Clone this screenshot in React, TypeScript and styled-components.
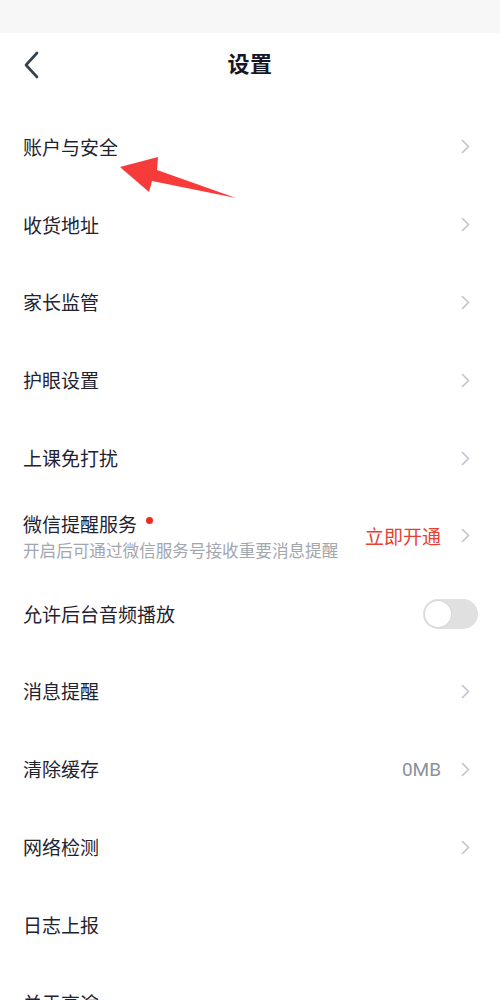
import React from 'react'
import styled, { createGlobalStyle } from 'styled-components'

const GlobalStyle = createGlobalStyle`
  html, body {
    margin: 0;
    padding: 0;
    background: #fff;
  }
  body {
    font-family: 'Noto Sans CJK SC', 'Noto Sans', sans-serif;
    color: #1f2330;
    overflow: hidden;
  }
`

const Page = styled.div`
  position: relative;
  width: 500px;
  height: 1000px;
  overflow: hidden;
  background: #fff;
`

const StatusBar = styled.div`
  height: 33px;
  background: #f7f7f7;
`

const Header = styled.header`
  height: 62px;
  display: flex;
  align-items: center;
  justify-content: center;
  position: relative;
  padding-bottom: 4px;
  box-sizing: border-box;
`

const BackButton = styled.button`
  position: absolute;
  left: 18px;
  top: 17px;
  width: 28px;
  height: 30px;
  border: 0;
  padding: 0;
  background: none;
  display: flex;
  align-items: center;
  justify-content: center;
`

const Title = styled.h1`
  margin: 0;
  font-size: 22px;
  font-weight: 700;
  color: #141826;
  letter-spacing: 0.5px;
`

const List = styled.ul`
  list-style: none;
  margin: 0;
  padding: 13px 0 0;
`

const Row = styled.li`
  height: 77.8px;
  display: flex;
  align-items: center;
  padding: 0 30px 0 23px;
  box-sizing: border-box;
`

const Main = styled.div`
  flex: 1;
  min-width: 0;
  display: flex;
  flex-direction: column;
`

const Label = styled.span`
  font-size: 19px;
  line-height: 26px;
  color: #1f2330;
  display: flex;
  align-items: center;
`

const Dot = styled.i`
  width: 7px;
  height: 7px;
  border-radius: 50%;
  background: #f02a1f;
  margin-left: 9px;
  margin-top: -6px;
`

const Sub = styled.span`
  font-size: 16.6px;
  line-height: 22px;
  margin-top: 2px;
  color: #a2a6ad;
  white-space: nowrap;
`

const Value = styled.span<{ $accent?: boolean }>`
  font-size: 19px;
  color: ${(p) => (p.$accent ? '#e8402f' : '#8b919c')};
  font-family: ${(p) =>
    p.$accent ? "'Noto Sans CJK SC', sans-serif" : "Roboto, 'Noto Sans', sans-serif"};
  margin-right: 20px;
`

const Toggle = styled.span`
  width: 55px;
  height: 30px;
  border-radius: 15px;
  background: #e0e0e0;
  display: flex;
  align-items: center;
  padding: 0 2px;
  box-sizing: border-box;
  margin-right: -8px;
`

const Knob = styled.span`
  width: 26px;
  height: 26px;
  border-radius: 50%;
  background: #fff;
  box-shadow: 0 0 0 1px #d6d6d6;
`

const Annotation = styled.svg`
  position: absolute;
  left: 0;
  top: 0;
  pointer-events: none;
`

const Chevron = () => (
  <svg width="9" height="15" viewBox="0 0 9 15">
    <path d="M1.5 1.5 L7.5 7.5 L1.5 13.5" fill="none" stroke="#bfc3ca" strokeWidth="1.6" strokeLinecap="round" strokeLinejoin="round" />
  </svg>
)

type Item = {
  label: string
  sub?: string
  dot?: boolean
  value?: string
  accent?: boolean
  toggle?: boolean
  noArrow?: boolean
}

const items: Item[] = [
  { label: '账户与安全' },
  { label: '收货地址' },
  { label: '家长监管' },
  { label: '护眼设置' },
  { label: '上课免打扰' },
  { label: '微信提醒服务', sub: '开启后可通过微信服务号接收重要消息提醒', dot: true, value: '立即开通', accent: true },
  { label: '允许后台音频播放', toggle: true },
  { label: '消息提醒' },
  { label: '清除缓存', value: '0MB' },
  { label: '网络检测' },
  { label: '日志上报', noArrow: true },
  { label: '关于高途', noArrow: true },
]

export default function App() {
  return (
    <Page>
      <GlobalStyle />
      <StatusBar />
      <Header>
        <BackButton aria-label="返回">
          <svg width="18" height="28" viewBox="0 0 18 28">
            <path d="M14 2 L3 14 L14 26" fill="none" stroke="#37404e" strokeWidth="2.6" strokeLinecap="round" strokeLinejoin="round" />
          </svg>
        </BackButton>
        <Title>设置</Title>
      </Header>
      <List>
        {items.map((it) => (
          <Row key={it.label}>
            <Main>
              <Label>
                {it.label}
                {it.dot && <Dot />}
              </Label>
              {it.sub && <Sub>{it.sub}</Sub>}
            </Main>
            {it.value && <Value $accent={it.accent}>{it.value}</Value>}
            {it.toggle ? (
              <Toggle>
                <Knob />
              </Toggle>
            ) : (
              !it.noArrow && <Chevron />
            )}
          </Row>
        ))}
      </List>
      <Annotation width="500" height="1000" viewBox="0 0 500 1000">
        <polygon points="120,167 158,157 157,170 236,198 152,181 149,192" fill="#f73b3b" />
      </Annotation>
    </Page>
  )
}
